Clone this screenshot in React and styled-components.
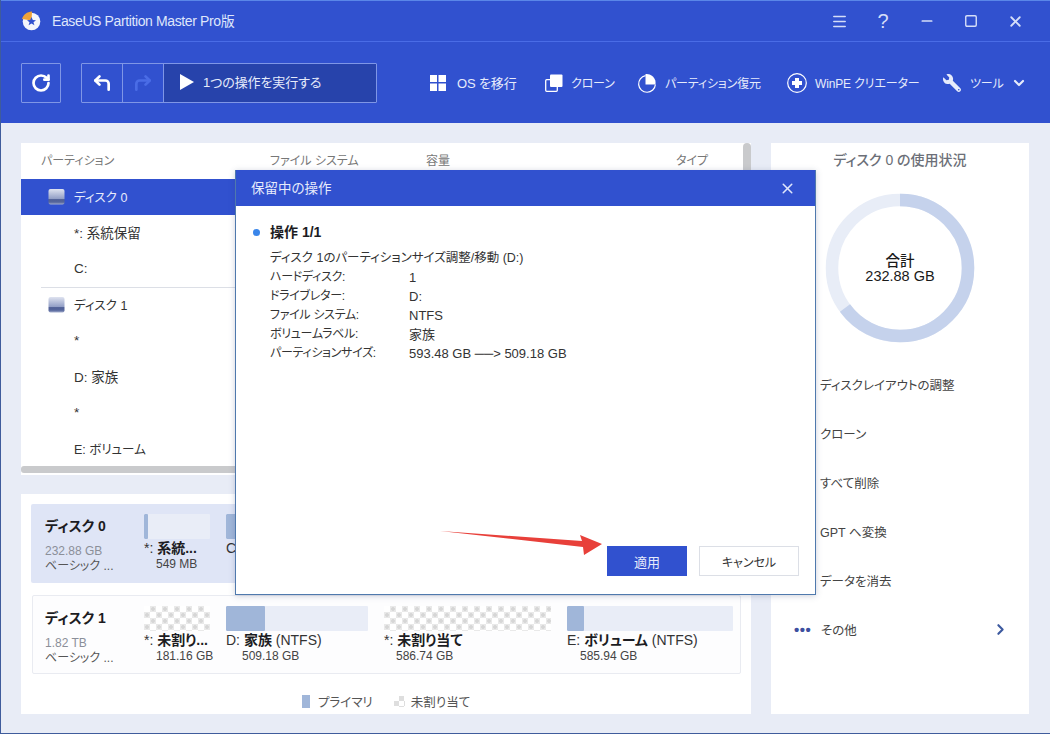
import React from 'react'
import styled, { createGlobalStyle } from 'styled-components'
import { RotateCw, CornerUpLeft, CornerUpRight, ChevronDown, ChevronRight, X, Minus, Menu, Square } from 'lucide-react'
import { FaWrench } from 'react-icons/fa'

const GlobalStyle = createGlobalStyle`
  html, body { margin: 0; padding: 0; background: #e8ecf6; }
  body {
    font-family: "Liberation Sans", "Noto Sans CJK JP", sans-serif;
    font-feature-settings: "palt";
    color: #222;
  }
  * { box-sizing: border-box; }
`

const hatchLayers = `
  radial-gradient(circle, #d6d6d6 1.5px, transparent 2.2px),
  radial-gradient(circle, #d6d6d6 1.5px, transparent 2.2px),
  repeating-conic-gradient(#e9e9e9 0 25%, #fff 0 50%)
`

const Window = styled.div`
  position: relative;
  width: 1050px;
  height: 734px;
  overflow: hidden;
  background: #e8ecf6;
  border-left: 1px solid #3f5c9c;
  border-bottom: 1px solid #3f5c9c;
`

const TitleBar = styled.div`
  height: 42px;
  background: #3151cf;
  border-top: 1px solid #5a86e8;
  border-bottom: 1px solid #4a6ce6;
  display: flex;
  align-items: center;
  padding: 0 13px 0 20px;
  color: #dfe6fb;
`

const AppName = styled.span`
  font-size: 14px;
  margin-left: 11px;
  padding-bottom: 2px;
  flex: 1;
  letter-spacing: -0.38px;
`

const WinButton = styled.button`
  width: 44px;
  height: 24px;
  padding: 0;
  border: 0;
  background: none;
  color: #d5def8;
  display: flex;
  align-items: center;
  justify-content: center;
  font: 400 20px "Liberation Sans", sans-serif;
`

const Toolbar = styled.div`
  height: 81px;
  background: #3151cf;
  display: flex;
  align-items: center;
  padding: 0 0 0 20px;
  color: #fff;
`

const Outline = styled.div`
  height: 40px;
  display: flex;
  border: 1px solid #7f96e6;
  border-radius: 1px;
  margin-right: ${p => p.$mr || 0}px;
`

const ToolCell = styled.div`
  width: ${p => p.$w}px;
  display: flex;
  align-items: center;
  justify-content: center;
  border-left: ${p => (p.$line ? '1px solid #7f96e6' : '0')};
`

const RunCell = styled.div`
  width: 213px;
  background: #2743ab;
  border-left: 1px solid #7f96e6;
  display: flex;
  align-items: center;
  padding: 0 0 2px 16px;
  gap: 9px;
  font-size: 13px;
  letter-spacing: -0.1px;
  color: #e6ebfb;
`

const ToolItem = styled.div`
  display: flex;
  align-items: center;
  gap: ${p => p.$gap || 8}px;
  width: ${p => p.$w}px;
  flex: none;
  font-size: ${p => p.$fs || 12}px;
  letter-spacing: -0.15px;
  color: #e6ebfb;
  white-space: nowrap;
`

const Main = styled.div`
  display: grid;
  grid-template-columns: 730px 258px;
  column-gap: 20px;
  padding: 20px 0 0 20px;
`

const LeftCol = styled.div`
  display: flex;
  flex-direction: column;
  gap: 19px;
`

const TablePanel = styled.div`
  position: relative;
  height: 332px;
  background: #fff;
`

const TableHead = styled.div`
  height: 36px;
  display: grid;
  grid-template-columns: 229px 156px 250px 1fr;
  align-items: center;
  padding: 0 0 3px 20px;
  font-size: 12px;
  color: #777;
`

const Row = styled.div`
  height: 36px;
  display: flex;
  align-items: center;
  padding: 0 0 2px ${p => (p.$disk ? 27 : 53)}px;
  gap: 9px;
  width: 722px;
  font-size: ${p => (p.$kana ? 12.5 : 13.5)}px;
  background: ${p => (p.$selected ? '#3151cf' : 'transparent')};
  color: ${p => (p.$selected ? '#e6ebfb' : '#333')};
`

const Divider = styled.div`
  height: 1px;
  margin: 0 8px -1px 20px;
  background: #dcdfe6;
`

const HScroll = styled.div`
  position: absolute;
  left: 0;
  right: 8px;
  top: 323px;
  height: 7px;
  border-radius: 3px;
  background: #c9cacc;
`

const VScroll = styled.div`
  position: absolute;
  right: 0;
  top: 0;
  width: 8px;
  height: 200px;
  border-radius: 4px;
  background: #c9cacc;
`

const DiskPanel = styled.div`
  height: 220px;
  background: #fff;
  padding: 10px 10px 0;
`

const DiskCard = styled.div`
  height: 79px;
  display: flex;
  padding: 10px 0 0 ${p => (p.$active ? 14 : 12)}px;
  margin: 0 0 12px ${p => (p.$active ? 0 : 1)}px;
  background: ${p => (p.$active ? '#dfe5f6' : '#fdfdfe')};
  border: ${p => (p.$active ? '0' : '1px solid #e9ebf1')};
  border-radius: 2px;
`

const DiskInfo = styled.div`
  width: 99px;
  flex: none;
`

const DiskName = styled.div`
  font-size: 14px;
  font-weight: 700;
  line-height: 24px;
  color: #1c1c22;
`

const DiskMeta = styled.div`
  margin-top: ${p => p.$mt || 0}px;
  font-size: 12px;
  line-height: 15px;
  color: ${p => (p.$soft ? '#8b8f99' : '#555')};
`

const Parts = styled.div`
  display: flex;
  gap: 16px;
`

const Part = styled.div`
  width: ${p => p.$w}px;
  flex: none;
`

const Bar = styled.div`
  height: 25px;
  margin-bottom: 1px;
  background: #e9edf7;
  border-radius: 1px;
  overflow: hidden;
`

const BarFill = styled.div`
  width: ${p => p.$w}px;
  height: 100%;
  background: #a0b6d9;
  border-radius: 1px;
`

const Hatch = styled.div`
  height: 25px;
  margin-bottom: 1px;
  background-color: #fff;
  background-image: ${hatchLayers};
  background-size: 12px 12px;
  background-position: 3px -3px, -3px 3px, 0 0;
`

const PartName = styled.div`
  font-size: 14px;
  line-height: 17px;
  color: #333;
  white-space: nowrap;
  & b { font-weight: 700; color: #1c1c22; }
`

const PartSize = styled.div`
  padding-left: ${p => p.$indent}px;
  font-size: 12px;
  line-height: 15px;
  color: #444;
  white-space: nowrap;
`

const Legend = styled.div`
  display: flex;
  align-items: center;
  margin: 18px 0 0 271px;
  font-size: 12.5px;
  color: #555;
`

const Swatch = styled.span`
  width: 8px;
  height: 13px;
  margin-right: 8px;
  background: #a0b6d9;
`

const SwatchHatch = styled.span`
  width: 11px;
  height: 11px;
  margin: 0 6px 0 21px;
  background-image: repeating-conic-gradient(#dedede 0 25%, #fff 0 50%);
  background-size: 10px 10px;
`

const UsagePanel = styled.div`
  height: 571px;
  background: #fff;
  padding-top: 7px;
`

const UsageTitle = styled.div`
  text-align: center;
  font-size: 14px;
  font-weight: 500;
  line-height: 20px;
  color: #6c6f78;
`

const Donut = styled.div`
  position: relative;
  width: 150px;
  height: 150px;
  margin: 23px 0 0 54px;
`

const DonutLabel = styled.div`
  position: absolute;
  inset: 0;
  display: flex;
  flex-direction: column;
  align-items: center;
  justify-content: center;
  padding-top: 2px;
  font-size: 14.5px;
  line-height: 15px;
  font-weight: 500;
  color: #1a1a1a;
`

const ActionList = styled.div`
  margin-top: 18px;
  padding-left: 23px;
`

const Action = styled.div`
  height: 49px;
  display: flex;
  align-items: center;
  padding: 0 0 2px ${p => (p.$plain ? 0 : 26)}px;
  font-size: 12.5px;
  color: #444;
`

const MoreDots = styled.span`
  width: 27px;
  font-size: 15px;
  font-weight: 700;
  letter-spacing: 0.5px;
  color: #3d4f9f;
`

const Modal = styled.div`
  position: absolute;
  left: 234px;
  top: 170px;
  width: 581px;
  height: 425px;
  background: #fff;
  border: 1px solid #4f79ad;
  border-top: 0;
  box-shadow: 0 1px 6px rgba(60, 70, 110, 0.25);
  display: flex;
  flex-direction: column;
`

const ModalHead = styled.div`
  height: 36px;
  background: #3151cf;
  display: flex;
  align-items: center;
  justify-content: space-between;
  padding: 0 19px 0 15px;
  font-size: 13.5px;
  color: #e6ebfb;
`

const HeadText = styled.span`
  padding-bottom: 2px;
`

const ModalBody = styled.div`
  flex: 1;
  padding: 17px 0 0 17px;
`

const OpTitle = styled.div`
  display: flex;
  align-items: center;
  gap: 10px;
  font-size: 14px;
  font-weight: 700;
  line-height: 18px;
  color: #1c1c22;
  margin-bottom: 8px;
`

const Bullet = styled.span`
  width: 7px;
  height: 7px;
  border-radius: 50%;
  background: #3a86ea;
`

const Details = styled.div`
  padding-left: 17px;
  font-size: 12.5px;
  line-height: 19px;
  color: #333;
`

const DetailRow = styled.div`
  display: grid;
  grid-template-columns: 139px 1fr;
  grid-template-rows: 19px;
  align-items: center;
  height: 19px;
`

const DetailKey = styled.span`
  font-size: 12px;
  letter-spacing: -0.3px;
`

const DetailValue = styled.span`
  font-size: 13px;
`

const ModalFoot = styled.div`
  display: flex;
  justify-content: flex-end;
  gap: 12px;
  padding: 0 16px 18px 0;
`

const PrimaryBtn = styled.button`
  width: 80px;
  height: 30px;
  border: 0;
  background: #3151cf;
  color: #e6ebfb;
  font: inherit;
  font-size: 13px;
`

const GhostBtn = styled.button`
  width: 100px;
  height: 30px;
  border: 1px solid #dcdfe6;
  background: #fff;
  color: #333;
  font: inherit;
  font-size: 12px;
`

const Pointer = styled.svg`
  position: absolute;
  left: 200px;
  top: 355px;
`

const Logo = () => (
  <svg width="20" height="20" viewBox="0 0 20 20">
    <circle cx="10.500" cy="10.500" r="8.800" fill="#f4f6fc" />
    <path d="M11 .5C6 .8 2.200 3.600 1 8L10.500 9.500Z" fill="#eda23a" />
    <path d="M10.500 6l1.300 3 3.200.2-2.500 2 .9 3.100-2.900-1.700-2.900 1.700.9-3.100-2.500-2 3.200-.2Z" fill="#3151cf" />
  </svg>
)

const DiskIcon = () => (
  <svg width="17" height="17" viewBox="0 0 17 17">
    <defs>
      <linearGradient id="hdd" x1="0" y1="0" x2="0" y2="1">
        <stop offset="0" stopColor="#dfe3f0" />
        <stop offset="0.65" stopColor="#8f9cc4" />
        <stop offset="0.68" stopColor="#4f5f95" />
        <stop offset="0.85" stopColor="#56669c" />
        <stop offset="1" stopColor="#a4aecd" />
      </linearGradient>
    </defs>
    <rect x="0.5" y="1" width="16" height="15.5" rx="2" fill="url(#hdd)" />
  </svg>
)

const PlayIcon = () => (
  <svg width="14" height="16" viewBox="0 0 14 16">
    <path d="M0 0L14 8L0 16Z" fill="#fff" />
  </svg>
)

const WindowsIcon = () => (
  <svg width="16" height="16" viewBox="0 0 16 16" fill="#fff">
    <rect width="7" height="7" />
    <rect x="8.5" width="7.5" height="7" />
    <rect y="8.5" width="7" height="7.5" />
    <rect x="8.5" y="8.5" width="7.5" height="7.5" />
  </svg>
)

const CloneIcon = () => (
  <svg width="18" height="18" viewBox="0 0 18 18">
    <rect x="0.7" y="5.7" width="11.6" height="11.6" rx="1" fill="none" stroke="#fff" strokeWidth="1.3" />
    <rect x="5" y="0.5" width="12.5" height="12.5" rx="1" fill="#fff" />
  </svg>
)

const PieIcon = () => (
  <svg width="20" height="20" viewBox="0 0 20 20">
    <path d="M8.5 2.600A8.400 8.400 0 1 0 18.400 11.500" fill="none" stroke="#fff" strokeWidth="1.200" />
    <path d="M8.500 2.600V11.500H18.400A8.900 8.900 0 0 0 8.500 1Z" fill="#fff" />
  </svg>
)

const PlusCircleIcon = () => (
  <svg width="20" height="20" viewBox="0 0 20 20">
    <circle cx="10" cy="10" r="9.300" fill="none" stroke="#fff" strokeWidth="1.200" />
    <path d="M8 5h4v3h3v4h-3v3H8v-3H5V8h3Z" fill="#fff" />
  </svg>
)

const UsageRing = () => (
  <svg width="150" height="150" viewBox="0 0 150 150">
    <circle cx="75" cy="75" r="68" fill="none" stroke="#e8edf7" strokeWidth="12.500" />
    <circle
      cx="75"
      cy="75"
      r="68"
      fill="none"
      stroke="#c5d2ec"
      strokeWidth="12.500"
      pathLength="360"
      strokeDasharray="234 360"
      transform="rotate(-90 75 75)"
    />
  </svg>
)

const rows = [
  { name: 'ディスク 0', disk: true, selected: true, kana: true },
  { name: '*: 系統保留' },
  { name: 'C:' },
  { name: 'ディスク 1', disk: true, divider: true, kana: true },
  { name: '*' },
  { name: 'D: 家族' },
  { name: '*' },
  { name: 'E: ボリューム', kana: true },
]

const details = [
  ['ハードディスク:', '1'],
  ['ドライブレター:', 'D:'],
  ['ファイル システム:', 'NTFS'],
  ['ボリュームラベル:', '家族'],
  ['パーティションサイズ:', '593.48 GB ──> 509.18 GB'],
]

const actions = ['ディスクレイアウトの調整', 'クローン', 'すべて削除', 'GPT へ変換', 'データを消去']

const PartBlock = ({ w, fill, hatch, prefix, name, rest, size, indent }) => (
  <Part $w={w}>
    {hatch ? <Hatch /> : <Bar><BarFill $w={fill} /></Bar>}
    <PartName>{prefix}<b>{name}</b>{rest}</PartName>
    <PartSize $indent={indent}>{size}</PartSize>
  </Part>
)

const App = () => {
  return (
    <Window>
      <GlobalStyle />
      <TitleBar>
        <Logo />
        <AppName>EaseUS Partition Master Pro版</AppName>
        <WinButton><Menu size={17} strokeWidth={2.2} /></WinButton>
        <WinButton>?</WinButton>
        <WinButton><Minus size={16} strokeWidth={2.6} /></WinButton>
        <WinButton><Square size={14} strokeWidth={2.4} /></WinButton>
        <WinButton><X size={17} strokeWidth={2.6} /></WinButton>
      </TitleBar>

      <Toolbar>
        <Outline $mr={20}>
          <ToolCell $w={38}><RotateCw size={20} strokeWidth={3.2} /></ToolCell>
        </Outline>
        <Outline $mr={53}>
          <ToolCell $w={40}><CornerUpLeft size={20} strokeWidth={3.2} /></ToolCell>
          <ToolCell $w={41} $line><CornerUpRight size={20} strokeWidth={3.2} color="#4a6ce6" /></ToolCell>
          <RunCell><PlayIcon />1つの操作を実行する</RunCell>
        </Outline>
        <ToolItem $w={115} $gap={11} $fs={13}><WindowsIcon />OS を移行</ToolItem>
        <ToolItem $w={92}><CloneIcon />クローン</ToolItem>
        <ToolItem $w={150}><PieIcon />パーティション復元</ToolItem>
        <ToolItem $w={156}><PlusCircleIcon />WinPE クリエーター</ToolItem>
        <ToolItem $w={90} $gap={9}>
          <FaWrench size={18} style={{ transform: 'scaleX(-1)' }} />
          ツール
          <ChevronDown size={16} strokeWidth={3.2} style={{ marginLeft: -2 }} />
        </ToolItem>
      </Toolbar>

      <Main>
        <LeftCol>
          <TablePanel>
            <TableHead>
              <span>パーティション</span>
              <span>ファイル システム</span>
              <span>容量</span>
              <span>タイプ</span>
            </TableHead>
            {rows.map((r, i) => (
              <React.Fragment key={i}>
                {r.divider && <Divider />}
                <Row $disk={r.disk} $selected={r.selected} $kana={r.kana}>
                  {r.disk && <DiskIcon />}
                  {r.name}
                </Row>
              </React.Fragment>
            ))}
            <HScroll />
            <VScroll />
          </TablePanel>

          <DiskPanel>
            <DiskCard $active>
              <DiskInfo>
                <DiskName>ディスク 0</DiskName>
                <DiskMeta $soft $mt={6}>232.88 GB</DiskMeta>
                <DiskMeta>ベーシック ...</DiskMeta>
              </DiskInfo>
              <Parts>
                <PartBlock w={66} fill={4} prefix="*: " name="系統..." size="549 MB" indent={12} />
                <PartBlock w={507} fill={60} prefix="C:" size="231.45 GB" indent={16} />
              </Parts>
            </DiskCard>
            <DiskCard>
              <DiskInfo>
                <DiskName>ディスク 1</DiskName>
                <DiskMeta $soft $mt={6}>1.82 TB</DiskMeta>
                <DiskMeta>ベーシック ...</DiskMeta>
              </DiskInfo>
              <Parts>
                <PartBlock w={66} hatch prefix="*: " name="未割り..." size="181.16 GB" indent={12} />
                <PartBlock w={142} fill={39} prefix="D: " name="家族" rest=" (NTFS)" size="509.18 GB" indent={16} />
                <PartBlock w={167} hatch prefix="*: " name="未割り当て" size="586.74 GB" indent={12} />
                <PartBlock w={166} fill={17} prefix="E: " name="ボリューム" rest=" (NTFS)" size="585.94 GB" indent={13} />
              </Parts>
            </DiskCard>
            <Legend>
              <Swatch />
              プライマリ
              <SwatchHatch />
              未割り当て
            </Legend>
          </DiskPanel>
        </LeftCol>

        <UsagePanel>
          <UsageTitle>ディスク 0 の使用状況</UsageTitle>
          <Donut>
            <UsageRing />
            <DonutLabel>
              <span>合計</span>
              <span>232.88 GB</span>
            </DonutLabel>
          </Donut>
          <ActionList>
            {actions.map(a => (
              <Action key={a}>{a}</Action>
            ))}
            <Action $plain>
              <MoreDots>•••</MoreDots>
              その他
              <ChevronRight size={17} strokeWidth={3} color="#3d5a9f" style={{ marginLeft: 135 }} />
            </Action>
          </ActionList>
        </UsagePanel>
      </Main>

      <Modal>
        <ModalHead>
          <HeadText>保留中の操作</HeadText>
          <X size={17} strokeWidth={2.2} color="#dfe6fb" />
        </ModalHead>
        <ModalBody>
          <OpTitle><Bullet />操作 1/1</OpTitle>
          <Details>
            <div>ディスク 1のパーティションサイズ調整/移動 (D:)</div>
            {details.map(([k, v]) => (
              <DetailRow key={k}><DetailKey>{k}</DetailKey><DetailValue>{v}</DetailValue></DetailRow>
            ))}
          </Details>
        </ModalBody>
        <ModalFoot>
          <PrimaryBtn>適用</PrimaryBtn>
          <GhostBtn>キャンセル</GhostBtn>
        </ModalFoot>
        <Pointer width="170" height="40" viewBox="0 0 170 40">
          <path d="M4 6L146 16L144 10L166 19L148 30L147 22Z" fill="#e8403a" />
        </Pointer>
      </Modal>
    </Window>
  )
}

export default App
